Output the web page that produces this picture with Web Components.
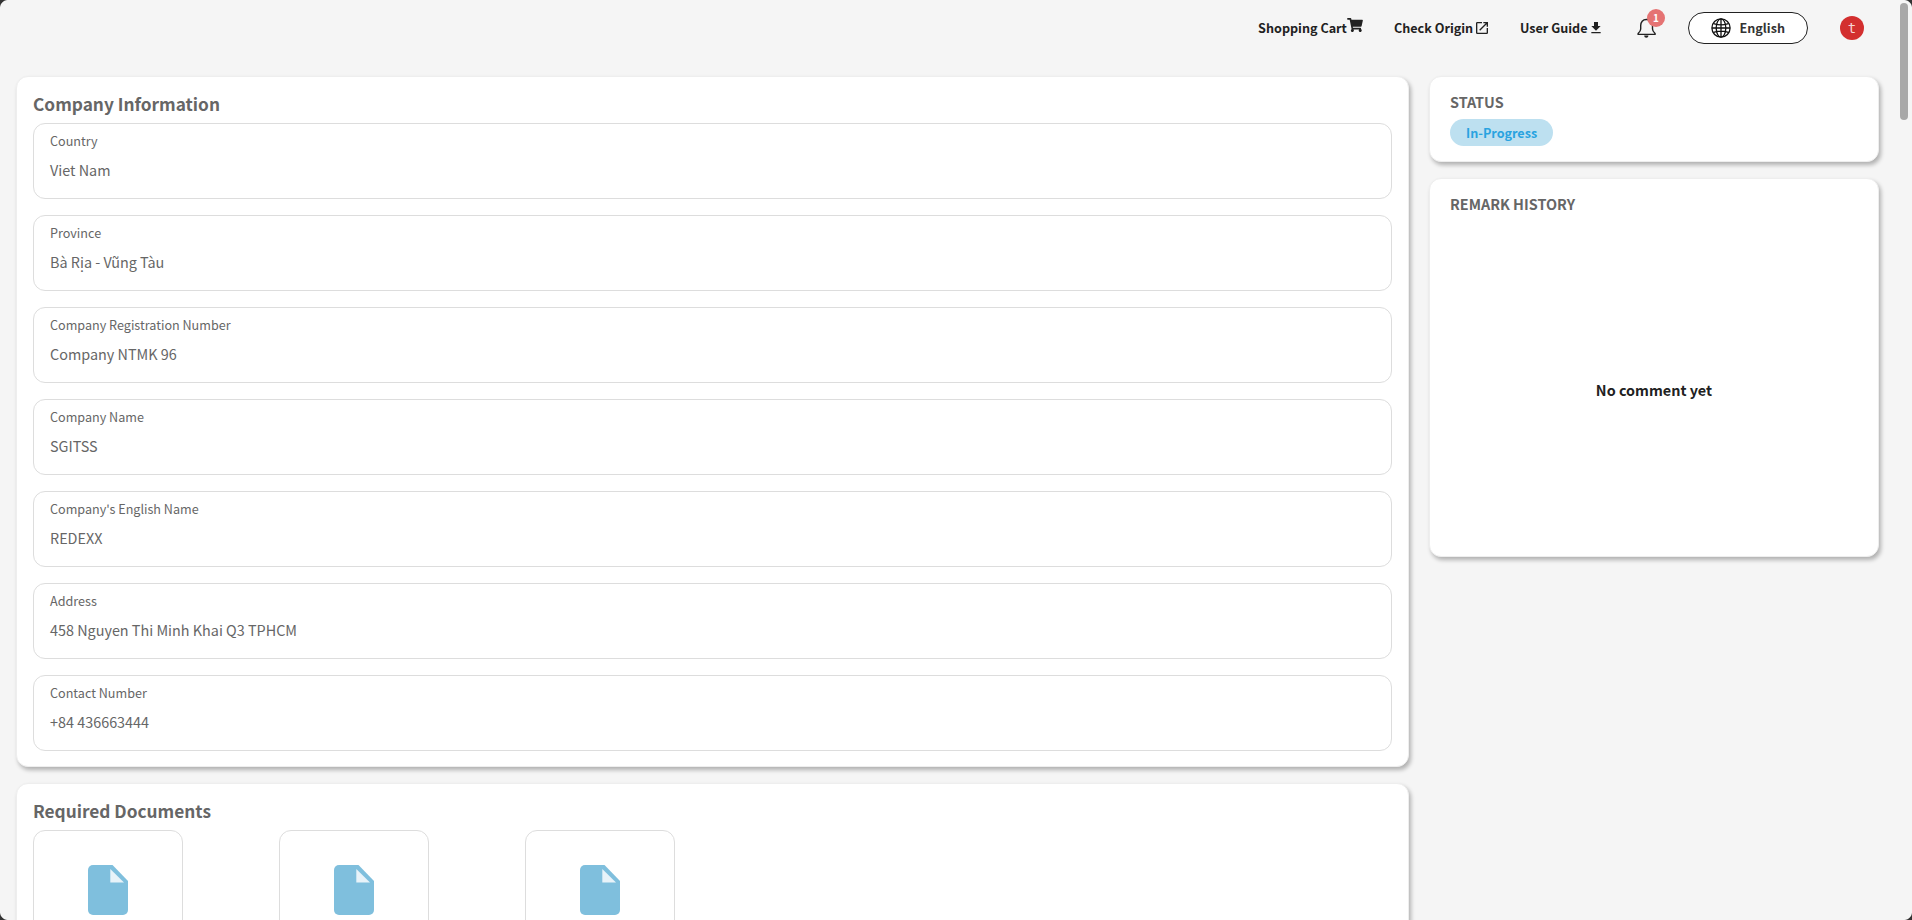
<!DOCTYPE html>
<html>
<head>
<meta charset="utf-8">
<title>Company Information</title>
<style>
  html, body { margin: 0; height: 100%; }
  body {
    background: #f5f5f5;
    overflow: hidden;
    font-family: "Noto Sans CJK SC", "Noto Sans", sans-serif;
    color: #212121;
  }
</style>
</head>
<body>
<app-shell>
  <top-bar slot="top"></top-bar>

  <info-card slot="main" heading="Company Information">
    <info-field label="Country" value="Viet Nam"></info-field>
    <info-field label="Province" value="Bà Rịa - Vũng Tàu"></info-field>
    <info-field label="Company Registration Number" value="Company NTMK 96"></info-field>
    <info-field label="Company Name" value="SGITSS"></info-field>
    <info-field label="Company's English Name" value="REDEXX"></info-field>
    <info-field label="Address" value="458 Nguyen Thi Minh Khai Q3 TPHCM"></info-field>
    <info-field label="Contact Number" value="+84 436663444"></info-field>
  </info-card>

  <doc-card slot="main" heading="Required Documents">
    <doc-tile></doc-tile>
    <doc-tile></doc-tile>
    <doc-tile></doc-tile>
  </doc-card>

  <status-card slot="side" status="In-Progress"></status-card>
  <remark-card slot="side"></remark-card>
</app-shell>

<script>
  const FONT = '"Noto Sans CJK SC", "Noto Sans", sans-serif'
  const CARD_SHADOW = '2px 3px 4px rgba(0,0,0,.28)'

  class AppShell extends HTMLElement {
    constructor () {
      super()
      this.attachShadow({mode: 'open'}).innerHTML = `
        <style>
          :host { display: block; height: 920px; overflow: hidden; position: relative; }
          .page { width: 1896px; }
          .content {
            display: grid;
            grid-template-columns: 1392.5px 450px;
            column-gap: 20.5px;
            padding: 20px 0 0 16px;
            align-items: start;
          }
          .col { display: flex; flex-direction: column; gap: 16px; }
          .track { position: absolute; top: 0; right: 0; width: 16px; height: 920px; background: #f5f5f5; }
          .thumb { position: absolute; top: 3px; left: 4px; width: 8px; height: 117px; background: #a8a8a8; border-radius: 4px; }
          .corner { position: absolute; width: 8px; height: 8px; }
          .tl { top: 0; left: 0; background: radial-gradient(circle at 100% 100%, transparent 7.5px, #333 8.5px); }
          .tr { top: 0; right: 0; background: radial-gradient(circle at 0 100%, transparent 7.5px, #333 8.5px); }
          .bl { bottom: 0; left: 0; background: radial-gradient(circle at 100% 0, transparent 7.5px, #333 8.5px); }
          .br { bottom: 0; right: 0; background: radial-gradient(circle at 0 0, transparent 7.5px, #333 8.5px); }
        </style>
        <div class="page">
          <slot name="top"></slot>
          <div class="content">
            <div class="col"><slot name="main"></slot></div>
            <div class="col"><slot name="side"></slot></div>
          </div>
        </div>
        <div class="track"><div class="thumb"></div></div>
        <div class="corner tl"></div><div class="corner tr"></div>
        <div class="corner bl"></div><div class="corner br"></div>`
    }
  }

  class TopBar extends HTMLElement {
    constructor () {
      super()
      this.attachShadow({mode: 'open'}).innerHTML = `
        <style>
          :host { display: flex; height: 56px; align-items: center; justify-content: flex-end; padding-right: 32px; box-sizing: border-box; font-family: ${FONT}; }
          a { display: flex; align-items: center; padding-bottom: 2px; font-size: 12.6px; font-weight: 700; color: #212121; text-decoration: none; white-space: nowrap; }
          svg { display: block; }
          .cart { margin-right: 31.1px; }
          .origin { margin-right: 29.8px; }
          .guide { margin-right: 30.5px; }
          .bell { position: relative; width: 24px; height: 24px; margin-right: 30px; }
          .badge {
            position: absolute; top: -7px; left: 13px; width: 18px; height: 18px; border-radius: 50%;
            background: #e57373; color: #fff; font-size: 10px; font-weight: 700; line-height: 18px; text-align: center;
          }
          .lang {
            display: flex; align-items: center; justify-content: center; gap: 8.5px;
            width: 120px; height: 32px; box-sizing: border-box; margin-right: 32px;
            border: 1px solid #212121; border-radius: 16px; background: #fff;
            font-size: 12.6px; font-weight: 700; color: #333;
          }
          .lang span { padding-bottom: 2px; }
          .avatar {
            width: 24px; height: 24px; border-radius: 50%; background: #d32f2f; color: #f7d6d6;
            font-size: 14px; line-height: 24px; text-align: center; font-family: "DejaVu Sans Mono", monospace;
          }
        </style>
        <a class="cart">Shopping Cart<svg width="16" height="14" viewBox="0 0 576 512" style="margin-top:-4px"><path fill="#212121" d="M528 301 575 93c3-15-8-29-23-29H159l-9-45C148 8 138 0 126 0H24C11 0 0 11 0 24v16c0 13 11 24 24 24h70l70 343c-17 10-28 28-28 49 0 31 25 56 56 56s56-25 56-56c0-16-6-30-17-40h209c-11 10-17 24-17 40 0 31 25 56 56 56s56-25 56-56c0-22-13-41-31-50l6-24c3-15-8-29-23-29H213l-6-32h298c11 0 21-8 23-19z"/></svg></a>
        <a class="origin">Check Origin<svg width="16" height="16" viewBox="0 0 24 24" style="margin:2px 0 0 1px"><path fill="#212121" d="M19 19H5V5h7V3H5a2 2 0 0 0-2 2v14a2 2 0 0 0 2 2h14a2 2 0 0 0 2-2v-7h-2v7zM14 3v2h3.6l-9.8 9.8 1.4 1.4L19 6.4V10h2V3h-7z"/></svg></a>
        <a class="guide">User Guide<svg width="16" height="16" viewBox="0 0 24 24" style="margin-top:2px"><path fill="#212121" d="M19 9h-4V3H9v6H5l7 7 7-7zM5 18v2h14v-2H5z"/></svg></a>
        <div class="bell">
          <svg width="24" height="24" viewBox="0 0 24 24">
            <path fill="none" stroke="#212121" stroke-width="1.4" stroke-linejoin="round" d="M12.3 3.5c-3.5 0-5.6 2.6-5.6 6v3.4c0 2-1.4 3.4-2.6 4.5v1h17v-1c-1.2-1.1-2.6-2.5-2.6-4.5V9.5c0-3.4-2.1-6-5.6-6z"/>
            <path fill="#212121" d="M10.2 19.4h4.2c0 1.3-1 2.3-2.1 2.3s-2.1-1-2.1-2.3z"/>
          </svg>
          <div class="badge">1</div>
        </div>
        <div class="lang">
          <svg width="20" height="20" viewBox="0 0 20 20" fill="none" stroke="#111" stroke-width="1.3"><circle cx="10" cy="10" r="9.1"/><ellipse cx="10" cy="10" rx="4.8" ry="9.1"/><path d="M10 1v18M1 10h18M2.6 5.6c4 1.4 10.8 1.4 14.8 0M2.6 14.4c4-1.4 10.8-1.4 14.8 0"/></svg>
          <span>English</span>
        </div>
        <div class="avatar">t</div>`
    }
  }

  class InfoCard extends HTMLElement {
    constructor () {
      super()
      this.attachShadow({mode: 'open'}).innerHTML = `
        <style>
          :host {
            display: block; background: #fff; border: 1px solid #eee; border-radius: 12px;
            box-shadow: ${CARD_SHADOW}; box-sizing: border-box;
            padding: 13px 16px 15px; font-family: ${FONT};
          }
          h2 { margin: 0 0 5px; font-size: 17.28px; line-height: 28px; font-weight: 700; color: #666; }
          .fields { display: flex; flex-direction: column; gap: 16px; }
        </style>
        <h2>${this.getAttribute('heading')}</h2>
        <div class="fields"><slot></slot></div>`
    }
  }

  class InfoField extends HTMLElement {
    constructor () {
      super()
      this.attachShadow({mode: 'open'}).innerHTML = `
        <style>
          :host {
            display: block; height: 76px; box-sizing: border-box; padding: 7px 16px;
            border: 1px solid #ddd; border-radius: 12px; background: #fff; color: #666;
          }
          .label { font-size: 12.6px; line-height: 20px; }
          .value { font-size: 14.4px; line-height: 24px; margin-top: 7px; }
        </style>
        <div class="label">${this.getAttribute('label')}</div>
        <div class="value">${this.getAttribute('value')}</div>`
    }
  }

  class DocCard extends HTMLElement {
    constructor () {
      super()
      this.attachShadow({mode: 'open'}).innerHTML = `
        <style>
          :host {
            display: block; background: #fff; border: 1px solid #eee; border-radius: 12px;
            box-shadow: ${CARD_SHADOW}; box-sizing: border-box;
            padding: 13px 16px 16px; height: 300px; font-family: ${FONT};
          }
          h2 { margin: 0 0 5px; font-size: 17.28px; line-height: 28px; font-weight: 700; color: #666; }
          .tiles { display: flex; gap: 96px; }
        </style>
        <h2>${this.getAttribute('heading')}</h2>
        <div class="tiles"><slot></slot></div>`
    }
  }

  class DocTile extends HTMLElement {
    constructor () {
      super()
      this.attachShadow({mode: 'open'}).innerHTML = `
        <style>
          :host {
            display: flex; justify-content: center; width: 150px; height: 200px; box-sizing: border-box;
            padding-top: 34px; border: 1px solid #ddd; border-radius: 12px; background: #fff;
          }
          svg { display: block; }
        </style>
        <svg width="40" height="50" viewBox="0 0 40 50">
          <path fill="#7fbfdd" d="M5 0H24.5L40 16V45a5 5 0 0 1-5 5H5a5 5 0 0 1-5-5V5a5 5 0 0 1 5-5z"/>
          <path fill="#e8f3f9" d="M22.3 4V17.5H36z"/>
        </svg>`
    }
  }

  class StatusCard extends HTMLElement {
    constructor () {
      super()
      this.attachShadow({mode: 'open'}).innerHTML = `
        <style>
          :host {
            display: block; height: 86px; box-sizing: border-box; padding: 13px 20px;
            background: #fff; border: 1px solid #eee; border-radius: 12px;
            box-shadow: ${CARD_SHADOW}; font-family: ${FONT};
          }
          h3 { margin: 0; font-size: 14.4px; line-height: 24px; font-weight: 700; color: #666; }
          .chip {
            display: inline-block; height: 27px; line-height: 27px; padding: 0 16px; margin-top: 5px;
            border-radius: 13.5px; background: #bde0f0; color: #29a3e0; font-size: 12.6px; font-weight: 700;
          }
        </style>
        <h3>STATUS</h3>
        <span class="chip">${this.getAttribute('status')}</span>`
    }
  }

  class RemarkCard extends HTMLElement {
    constructor () {
      super()
      this.attachShadow({mode: 'open'}).innerHTML = `
        <style>
          :host {
            display: flex; flex-direction: column; height: 379px; box-sizing: border-box; padding: 13px 20px;
            background: #fff; border: 1px solid #eee; border-radius: 12px;
            box-shadow: ${CARD_SHADOW}; font-family: ${FONT};
          }
          h3 { margin: 0; font-size: 14.4px; line-height: 24px; font-weight: 700; color: #666; }
          .empty { flex: 1; display: flex; align-items: center; justify-content: center; font-size: 14.4px; font-weight: 700; color: #212121; padding-top: 19px; }
        </style>
        <h3>REMARK HISTORY</h3>
        <div class="empty">No comment yet</div>`
    }
  }

  customElements.define('app-shell', AppShell)
  customElements.define('top-bar', TopBar)
  customElements.define('info-card', InfoCard)
  customElements.define('info-field', InfoField)
  customElements.define('doc-card', DocCard)
  customElements.define('doc-tile', DocTile)
  customElements.define('status-card', StatusCard)
  customElements.define('remark-card', RemarkCard)
</script>
</body>
</html>
